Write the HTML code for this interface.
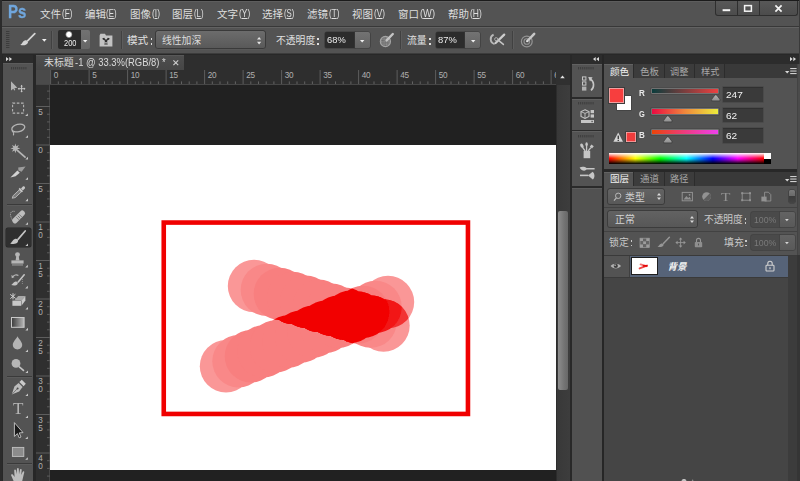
<!DOCTYPE html>
<html><head><meta charset="utf-8"><title>Photoshop</title>
<style>
html,body{margin:0;padding:0;}
body{width:800px;height:481px;overflow:hidden;background:#282828;position:relative;font-family:"Liberation Sans",sans-serif;}
#root{position:absolute;left:0;top:0;width:800px;height:481px;overflow:hidden;background:#282828;}
#root div,#root svg,#root span{position:absolute;display:block;}
#root span{white-space:nowrap;line-height:1;}
#root svg text{font-family:"Liberation Sans","Noto Sans CJK SC",sans-serif;}
</style></head><body><div id="root">
<div style="left:0px;top:0px;width:800px;height:27px;background:#535353;"></div>
<div style="left:0px;top:0px;width:800px;height:1px;background:#1b1b1b;"></div>
<div style="left:0px;top:1px;width:800px;height:1px;background:#5d5d5d;"></div>
<div style="left:0px;top:26px;width:800px;height:1px;background:#383838;"></div>
<div style="left:0px;top:27px;width:800px;height:26.6px;background:#535353;"></div>
<div style="left:0px;top:27px;width:800px;height:1px;background:#626262;"></div>
<div style="left:0px;top:53.4px;width:800px;height:1.1px;background:#3c3c3c;"></div>
<div style="left:0px;top:54.5px;width:800px;height:1.5px;background:#292929;"></div>
<div style="left:0px;top:0px;width:2px;height:481px;background:#2b2b2b;"></div>
<span style="left:8px;top:3.80px;font-size:17.6px;color:#70a6dc;font-weight:bold;transform:scaleX(0.850);transform-origin:0 0;-webkit-text-stroke:0.3px #70a6dc">Ps</span>
<svg style="left:40.182px;top:6.34px" width="26" height="16" viewBox="0 -11.66 26 16"><text x="0" y="0" font-size="10.5" fill="#dedede">文件</text></svg>
<span style="left:61.9px;top:8.80px;font-size:10.4px;color:#dedede;transform:scaleX(0.776);transform-origin:0 0;">(<span style="position:static;display:inline;text-decoration:underline;text-underline-offset:1px">F</span>)</span>
<svg style="left:84.982px;top:6.34px" width="25" height="16" viewBox="0 -11.66 25 16"><text x="0" y="0" font-size="10.5" fill="#dedede">编辑</text></svg>
<span style="left:106.3px;top:8.80px;font-size:10.4px;color:#dedede;transform:scaleX(0.757);transform-origin:0 0;">(<span style="position:static;display:inline;text-decoration:underline;text-underline-offset:1px">E</span>)</span>
<svg style="left:129.982px;top:6.34px" width="25" height="16" viewBox="0 -11.66 25 16"><text x="0" y="0" font-size="10.5" fill="#dedede">图像</text></svg>
<span style="left:151.6px;top:8.80px;font-size:10.4px;color:#dedede;transform:scaleX(0.815);transform-origin:0 0;">(<span style="position:static;display:inline;text-decoration:underline;text-underline-offset:1px">I</span>)</span>
<svg style="left:172.482px;top:6.34px" width="25" height="16" viewBox="0 -11.66 25 16"><text x="0" y="0" font-size="10.5" fill="#dedede">图层</text></svg>
<span style="left:194px;top:8.80px;font-size:10.4px;color:#dedede;transform:scaleX(0.755);transform-origin:0 0;">(<span style="position:static;display:inline;text-decoration:underline;text-underline-offset:1px">L</span>)</span>
<svg style="left:216.982px;top:6.34px" width="25" height="16" viewBox="0 -11.66 25 16"><text x="0" y="0" font-size="10.5" fill="#dedede">文字</text></svg>
<span style="left:238.6px;top:8.80px;font-size:10.4px;color:#dedede;transform:scaleX(0.808);transform-origin:0 0;">(<span style="position:static;display:inline;text-decoration:underline;text-underline-offset:1px">Y</span>)</span>
<svg style="left:262.482px;top:6.34px" width="26" height="16" viewBox="0 -11.66 26 16"><text x="0" y="0" font-size="10.5" fill="#dedede">选择</text></svg>
<span style="left:284.2px;top:8.80px;font-size:10.4px;color:#dedede;transform:scaleX(0.750);transform-origin:0 0;">(<span style="position:static;display:inline;text-decoration:underline;text-underline-offset:1px">S</span>)</span>
<svg style="left:307.482px;top:6.34px" width="26" height="16" viewBox="0 -11.66 26 16"><text x="0" y="0" font-size="10.5" fill="#dedede">滤镜</text></svg>
<span style="left:329.2px;top:8.80px;font-size:10.4px;color:#dedede;transform:scaleX(0.783);transform-origin:0 0;">(<span style="position:static;display:inline;text-decoration:underline;text-underline-offset:1px">T</span>)</span>
<svg style="left:352.482px;top:6.34px" width="26" height="16" viewBox="0 -11.66 26 16"><text x="0" y="0" font-size="10.5" fill="#dedede">视图</text></svg>
<span style="left:374.2px;top:8.80px;font-size:10.4px;color:#dedede;transform:scaleX(0.793);transform-origin:0 0;">(<span style="position:static;display:inline;text-decoration:underline;text-underline-offset:1px">V</span>)</span>
<svg style="left:397.982px;top:6.34px" width="26" height="16" viewBox="0 -11.66 26 16"><text x="0" y="0" font-size="10.5" fill="#dedede">窗口</text></svg>
<span style="left:419.8px;top:8.80px;font-size:10.4px;color:#dedede;transform:scaleX(0.896);transform-origin:0 0;">(<span style="position:static;display:inline;text-decoration:underline;text-underline-offset:1px">W</span>)</span>
<svg style="left:447.982px;top:6.34px" width="26" height="16" viewBox="0 -11.66 26 16"><text x="0" y="0" font-size="10.5" fill="#dedede">帮助</text></svg>
<span style="left:469.8px;top:8.80px;font-size:10.4px;color:#dedede;transform:scaleX(0.817);transform-origin:0 0;">(<span style="position:static;display:inline;text-decoration:underline;text-underline-offset:1px">H</span>)</span>
<div style="left:714.5px;top:1px;width:83px;height:14.5px;background:#4d4d4d;border:1px solid #2e2e2e;border-top:none;border-radius:0 0 3px 3px;box-sizing:border-box;background:linear-gradient(#585858,#4c4c4c)"></div>
<div style="left:737px;top:1px;width:1px;height:14px;background:#2e2e2e;"></div>
<div style="left:759px;top:1px;width:1px;height:14px;background:#2e2e2e;"></div>
<svg style="left:714px;top:1px;" width="84" height="15" viewBox="0 0 84 15"><rect x="8.6" y="8.2" width="7.6" height="2" fill="#f4f4f4"/><rect x="30.6" y="4.6" width="6.8" height="5.6" fill="none" stroke="#f4f4f4" stroke-width="1.5"/><path d="M61.4 4.4L67.6 10.6M67.6 4.4L61.4 10.6" stroke="#f4f4f4" stroke-width="1.7"/></svg>
<svg style="left:6.2px;top:31.4px;" width="4" height="18" viewBox="0 0 4 18"><rect x="0" y="0.0" width="3.4" height="1" fill="#3c3c3c"/><rect x="0" y="2.0" width="3.4" height="1" fill="#3c3c3c"/><rect x="0" y="4.0" width="3.4" height="1" fill="#3c3c3c"/><rect x="0" y="6.0" width="3.4" height="1" fill="#3c3c3c"/><rect x="0" y="8.0" width="3.4" height="1" fill="#3c3c3c"/><rect x="0" y="10.0" width="3.4" height="1" fill="#3c3c3c"/><rect x="0" y="12.0" width="3.4" height="1" fill="#3c3c3c"/><rect x="0" y="14.0" width="3.4" height="1" fill="#3c3c3c"/><rect x="0" y="16.0" width="3.4" height="1" fill="#3c3c3c"/></svg>
<svg style="left:18px;top:31px;" width="20" height="18" viewBox="0 0 20 18"><path d="M16.8 2.6L9.8 9.6" stroke="#d4d4d4" stroke-width="1.8" stroke-linecap="round"/><path d="M2.2 13.8C4.2 13.4 4.2 10 7.2 9.2C9.2 8.8 10.6 10.4 9.8 12C8.4 14.6 4.8 14.8 2.2 13.8Z" fill="#d4d4d4"/></svg>
<svg style="left:42.2px;top:39px;" width="5.6" height="3.8" viewBox="0 0 5.6 3.8"><path d="M0 0L4.6 0L2.3 2.8Z" fill="#f0f0f0"/></svg>
<div style="left:51.4px;top:31px;width:1px;height:18px;background:#414141;"></div>
<div style="left:52.4px;top:31px;width:1px;height:18px;background:#5c5c5c;"></div>
<div style="left:57.8px;top:30.4px;width:23.4px;height:18.8px;background:#2b2b2b;border-radius:2px 0 0 2px"></div>
<div style="left:81.2px;top:30.4px;width:8.4px;height:18.8px;background:linear-gradient(#727272,#666);border-radius:0 2px 2px 0"></div>
<svg style="left:64px;top:30.4px;" width="10" height="9" viewBox="0 0 10 9"><defs><radialGradient id="bd"><stop offset="0.55" stop-color="#fff"/><stop offset="1" stop-color="#fff" stop-opacity="0"/></radialGradient></defs><circle cx="4.9" cy="4.5" r="3.8" fill="url(#bd)"/></svg>
<span style="left:64.2px;top:39.45px;font-size:8.8px;color:#f0f0f0;transform:scaleX(0.845);transform-origin:0 0;">200</span>
<svg style="left:83.2px;top:39.6px;" width="5.4" height="3.6" viewBox="0 0 5.4 3.6"><path d="M0 0L4.4 0L2.2 2.6Z" fill="#f0f0f0"/></svg>
<svg style="left:99px;top:32.6px;" width="15" height="15" viewBox="0 0 15 15"><path d="M0.6 2.4L0.6 13.4L13.4 13.4L13.4 2.4L7 2.4L6 0.8L1.4 0.8Z" fill="#c2c2c2"/><path d="M3.4 5.2L5.2 4.8L6.4 6.6L7.6 6.6L8.8 4.8L10.6 5.2L10.2 6.6L8.2 7.6L8.2 10.2L8.8 11.6L5.2 11.6L5.8 10.2L5.8 7.6L3.8 6.6Z" fill="#2e2e2e"/><rect x="6.3" y="9" width="1.4" height="1.6" fill="#c2c2c2"/></svg>
<div style="left:120.6px;top:31px;width:1px;height:18px;background:#414141;"></div>
<div style="left:121.6px;top:31px;width:1px;height:18px;background:#5c5c5c;"></div>
<svg style="left:127.282px;top:32.44px" width="27" height="16" viewBox="0 -11.66 27 16"><text x="0" y="0" font-size="10.6" fill="#e0e0e0">模式</text></svg>
<div style="left:150.6px;top:38.4px;width:1.5px;height:1.6px;background:#e0e0e0;"></div>
<div style="left:150.6px;top:43.4px;width:1.5px;height:1.6px;background:#e0e0e0;"></div>
<div style="left:156.4px;top:31.4px;width:108.6px;height:17px;background:linear-gradient(#6c6c6c,#595959);border-radius:2.5px;box-shadow:0 0 0 1px #3a3a3a, 0 1.6px 0 0 #5e5e5e"></div>
<svg style="left:162.29399999999998px;top:32.58px" width="43" height="16" viewBox="0 -11.22 43 16"><text x="0" y="0" font-size="9.8" fill="#dcdcdc">线性加深</text></svg>
<svg style="left:257.4px;top:37.4px;" width="5" height="8" viewBox="0 0 5 8"><path d="M0 2.6L2.1 0L4.2 2.6ZM0 4.8L4.2 4.8L2.1 7.4Z" fill="#e4e4e4"/></svg>
<svg style="left:276.094px;top:32.88px" width="43" height="16" viewBox="0 -11.22 43 16"><text x="0" y="0" font-size="9.8" fill="#e0e0e0">不透明度</text></svg>
<div style="left:317.2px;top:38.4px;width:1.5px;height:1.6px;background:#e0e0e0;"></div>
<div style="left:317.2px;top:43.4px;width:1.5px;height:1.6px;background:#e0e0e0;"></div>
<div style="left:325.2px;top:32px;width:29.4px;height:16.2px;background:#2c2c2c;border-radius:2px 0 0 2px;box-shadow:0 0 0 0.6px #3a3a3a"></div>
<div style="left:354.59999999999997px;top:32px;width:15px;height:16.2px;background:linear-gradient(#737373,#636363);border-radius:0 2px 2px 0;box-shadow:0 0 0 0.6px #3a3a3a"></div>
<span style="left:327.3px;top:35.30px;font-size:9.8px;color:#ececec;transform:scaleX(0.953);transform-origin:0 0;">68%</span>
<svg style="left:360.0px;top:39.6px;" width="5.4" height="3.6" viewBox="0 0 5.4 3.6"><path d="M0 0L4.4 0L2.2 2.6Z" fill="#f0f0f0"/></svg>
<svg style="left:378px;top:32px;" width="18" height="18" viewBox="0 0 18 18"><defs><pattern id="ck" width="2.4" height="2.4" patternUnits="userSpaceOnUse" patternTransform="rotate(45)"><rect width="2.4" height="2.4" fill="#6c6c6c"/><rect width="1.2" height="1.2" fill="#8e8e8e"/><rect x="1.2" y="1.2" width="1.2" height="1.2" fill="#8e8e8e"/></pattern></defs><circle cx="7.4" cy="9.5" r="5.1" fill="url(#ck)" stroke="#a4a4a4" stroke-width="1.1"/><path d="M8.6 8.4L14.8 2" stroke="#c4c4c4" stroke-width="2.4" stroke-linecap="round"/></svg>
<div style="left:400.4px;top:31px;width:1px;height:18px;background:#414141;"></div>
<div style="left:401.4px;top:31px;width:1px;height:18px;background:#5c5c5c;"></div>
<svg style="left:407.494px;top:32.88px" width="24" height="16" viewBox="0 -11.22 24 16"><text x="0" y="0" font-size="9.8" fill="#e0e0e0">流量</text></svg>
<div style="left:429.2px;top:38.4px;width:1.5px;height:1.6px;background:#e0e0e0;"></div>
<div style="left:429.2px;top:43.4px;width:1.5px;height:1.6px;background:#e0e0e0;"></div>
<div style="left:436px;top:32px;width:29.4px;height:16.2px;background:#2c2c2c;border-radius:2px 0 0 2px;box-shadow:0 0 0 0.6px #3a3a3a"></div>
<div style="left:465.4px;top:32px;width:15px;height:16.2px;background:linear-gradient(#737373,#636363);border-radius:0 2px 2px 0;box-shadow:0 0 0 0.6px #3a3a3a"></div>
<span style="left:438.2px;top:35.30px;font-size:9.8px;color:#ececec;transform:scaleX(0.958);transform-origin:0 0;">87%</span>
<svg style="left:470.8px;top:39.6px;" width="5.4" height="3.6" viewBox="0 0 5.4 3.6"><path d="M0 0L4.4 0L2.2 2.6Z" fill="#f0f0f0"/></svg>
<svg style="left:489px;top:32px;" width="18" height="16" viewBox="0 0 18 16"><path d="M4.6 2.6C0.6 4.4 0.6 10.6 5.6 12" fill="none" stroke="#b8b8b8" stroke-width="1.9"/><path d="M6.6 11L15.2 2.6" stroke="#cccccc" stroke-width="2.3" stroke-linecap="round"/><path d="M9.8 8.6L14.4 12.4" stroke="#c4c4c4" stroke-width="1.5" stroke-linecap="round"/><circle cx="7.2" cy="7.2" r="1.6" fill="none" stroke="#b0b0b0" stroke-width="0.9"/></svg>
<div style="left:512px;top:31px;width:1px;height:18px;background:#414141;"></div>
<div style="left:513px;top:31px;width:1px;height:18px;background:#5c5c5c;"></div>
<svg style="left:519px;top:32px;" width="18" height="18" viewBox="0 0 18 18"><circle cx="7.8" cy="9.5" r="5.4" fill="none" stroke="#949494" stroke-width="1.2"/><circle cx="7.8" cy="9.5" r="2.8" fill="none" stroke="#949494" stroke-width="1.1"/><path d="M8.4 9L15.2 1.8" stroke="#c6c6c6" stroke-width="2.5" stroke-linecap="round"/><circle cx="8.2" cy="9.2" r="0.9" fill="#e4e4e4"/></svg>
<div style="left:2.8px;top:54.6px;width:30.6px;height:8.8px;background:#2c2c2c;"></div>
<div style="left:2.8px;top:63.4px;width:30.6px;height:417.6px;background:#535353;"></div>
<div style="left:2.8px;top:63.4px;width:30.6px;height:1px;background:#5c5c5c;"></div>
<div style="left:33.4px;top:54.6px;width:2.6px;height:426.4px;background:#272727;"></div>
<svg style="left:6.2px;top:57.1px;" width="8" height="5" viewBox="0 0 8 5"><path d="M0 0L2.7 2.1L0 4.2ZM3.3 0L6 2.1L3.3 4.2Z" fill="#dcdcdc"/></svg>
<svg style="left:10.5px;top:67px;" width="17" height="3" viewBox="0 0 17 3"><rect x="0.00" y="0" width="1.1" height="2.4" fill="#3e3e3e"/><rect x="2.05" y="0" width="1.1" height="2.4" fill="#3e3e3e"/><rect x="4.10" y="0" width="1.1" height="2.4" fill="#3e3e3e"/><rect x="6.15" y="0" width="1.1" height="2.4" fill="#3e3e3e"/><rect x="8.20" y="0" width="1.1" height="2.4" fill="#3e3e3e"/><rect x="10.25" y="0" width="1.1" height="2.4" fill="#3e3e3e"/><rect x="12.30" y="0" width="1.1" height="2.4" fill="#3e3e3e"/><rect x="14.35" y="0" width="1.1" height="2.4" fill="#3e3e3e"/></svg>
<div style="left:6px;top:228px;width:25px;height:19px;background:#2f2f2f;border-radius:2px;box-shadow:0 0 0 0.5px #262626"></div>
<div style="left:6.5px;top:203.5px;width:25px;height:1px;background:#3a3a3a;"></div>
<div style="left:6.5px;top:204.5px;width:25px;height:1px;background:#5b5b5b;"></div>
<div style="left:6.5px;top:375.5px;width:25px;height:1px;background:#3a3a3a;"></div>
<div style="left:6.5px;top:376.5px;width:25px;height:1px;background:#5b5b5b;"></div>
<div style="left:6.5px;top:462.5px;width:25px;height:1px;background:#3a3a3a;"></div>
<div style="left:6.5px;top:463.5px;width:25px;height:1px;background:#5b5b5b;"></div>
<svg style="left:0;top:0" width="36" height="481" viewBox="0 0 36 481"><path d="M11 81.3L11 90.6L13.3 88.7L14.2 90.6L15.3 90.1L14.4 88.2L17.3 87.7Z" fill="#b4b4b4"/><path d="M21.6 85.4L21.6 92M18.3 88.7L24.9 88.7" stroke="#c6c6c6" stroke-width="1" fill="none"/><path d="M20.4 86.4L21.6 84.8L22.8 86.4ZM20.4 91L21.6 92.6L22.8 91ZM19.3 87.5L17.7 88.7L19.3 89.9ZM23.9 87.5L25.5 88.7L23.9 89.9Z" fill="#c6c6c6"/><rect x="12.6" y="103.1" width="11" height="10" fill="none" stroke="#b6b6b6" stroke-width="1.05" stroke-dasharray="2.6 1.6"/><path d="M27.8 113.4L27.8 116.0L25.2 116.0Z" fill="#c8c8c8"/><ellipse cx="18.3" cy="128" rx="6.6" ry="3.7" transform="rotate(-14 18.3 128)" fill="none" stroke="#b6b6b6" stroke-width="1.3"/><path d="M12.4 130.2C11.6 132.2 14.2 132.6 14.2 131.4M13.2 132.2C14 133.4 13.8 134.6 13.2 135.4" fill="none" stroke="#b6b6b6" stroke-width="1.1"/><path d="M28.0 135.2L28.0 137.79999999999998L25.4 137.79999999999998Z" fill="#c8c8c8"/><path d="M20.30 148.40 L17.43 149.24 L18.86 151.86 L16.24 150.43 L15.40 153.30 L14.56 150.43 L11.94 151.86 L13.37 149.24 L10.50 148.40 L13.37 147.56 L11.94 144.94 L14.56 146.37 L15.40 143.50 L16.24 146.37 L18.86 144.94 L17.43 147.56Z" fill="#b6b6b6"/><path d="M17.6 150.6L25.6 157.6" stroke="#b6b6b6" stroke-width="1.7"/><path d="M28.0 156.8L28.0 159.4L25.4 159.4Z" fill="#c8c8c8"/><path d="M10.4 177.4L17.4 170.6L19.8 172.8L15.6 176.2Z" fill="#d2d2d2"/><path d="M18.2 167.6L25.6 166.4L21.6 171.8L18.4 170.4Z" fill="#9c9c9c"/><path d="M28.0 177.2L28.0 179.79999999999998L25.4 179.79999999999998Z" fill="#c8c8c8"/><path d="M12.2 198.2L13.2 195.6L19.4 189.8L21.4 191.8L15.2 197.6Z" fill="#7c7c7c" stroke="#b6b6b6" stroke-width="1"/><path d="M18.6 189L21.8 192.4L23 191.2L19.8 187.8Z" fill="#c6c6c6"/><path d="M21 188.6L22.8 186.6C24 185.6 25.8 187.2 24.8 188.6L22.8 190.4Z" fill="#c6c6c6"/><path d="M28.0 198.6L28.0 201.2L25.4 201.2Z" fill="#c8c8c8"/><rect x="10.8" y="214.2" width="15.6" height="5.4" rx="2.4" transform="rotate(-45 18.6 216.9)" fill="#bdbdbd"/><path d="M16.4 217.2L19 219.8M17.8 215.8L20.4 218.4M19.2 214.4L21.8 217" stroke="#6a6a6a" stroke-width="0.8"/><path d="M14.6 211.4C11.4 210.6 10 213 10.6 215.4C11 217.4 11.6 219 12.8 220.4" fill="none" stroke="#b0b0b0" stroke-width="0.9" stroke-dasharray="1 0.8"/><path d="M28.0 222.2L28.0 224.79999999999998L25.4 224.79999999999998Z" fill="#c8c8c8"/><path d="M25.2 231L18 239.4" stroke="#c4c4c4" stroke-width="1.7" stroke-linecap="round"/><path d="M10.2 243.4C12.2 242.8 12.2 239.6 15.4 238.8C17.6 238.6 18.8 240.4 17.8 242C16.4 244.2 12.8 244.4 10.2 243.4Z" fill="#c4c4c4"/><path d="M28.0 243.4L28.0 246.0L25.4 246.0Z" fill="#c8c8c8"/><circle cx="17.5" cy="254.6" r="2.4" fill="#b6b6b6"/><path d="M16.3 256L18.7 256L19.4 260.4L15.6 260.4Z" fill="#b6b6b6"/><rect x="11.4" y="260.4" width="12.2" height="3.2" fill="#b6b6b6"/><rect x="12" y="264.4" width="11" height="1.1" fill="#9a9a9a"/><path d="M27.8 264.8L27.8 267.40000000000003L25.2 267.40000000000003Z" fill="#c8c8c8"/><path d="M24.2 274.8L18.2 282" stroke="#c4c4c4" stroke-width="1.6" stroke-linecap="round"/><path d="M11.2 285C12.8 284.6 13 282.2 15.6 281.6C17.2 281.4 18.4 282.8 17.6 284C16.4 285.8 13.4 285.8 11.2 285Z" fill="#c4c4c4"/><path d="M12.4 277.2C13.6 274.8 16.6 274.4 18.4 275.4" fill="none" stroke="#b6b6b6" stroke-width="1.1"/><path d="M11.4 275L11.8 278.2L14.6 277Z" fill="#b6b6b6"/><path d="M22.4 279L22.4 285" stroke="#9a9a9a" stroke-width="0.8" stroke-dasharray="1 1"/><path d="M27.8 285.8L27.8 288.40000000000003L25.2 288.40000000000003Z" fill="#c8c8c8"/><path d="M14.4 300.2L18.2 296L25.4 296L21.6 300.2Z" fill="#a8a8a8"/><path d="M21.6 300.2L25.4 296L25.4 300.6L21.6 305.4Z" fill="#cacaca"/><rect x="12.4" y="300.6" width="8.8" height="5.2" fill="#c8c8c8"/><path d="M10.2 294.4L15.6 298.4M10.4 298.6L15.4 294.2M13 293.2L13 299.4" stroke="#cecece" stroke-width="1"/><path d="M28.0 307L28.0 309.6L25.4 309.6Z" fill="#c8c8c8"/><defs><linearGradient id="gt" x1="0" x2="1"><stop offset="0" stop-color="#3a3a3a"/><stop offset="1" stop-color="#b8b8b8"/></linearGradient></defs><rect x="11.5" y="317.5" width="12.6" height="9.8" fill="url(#gt)" stroke="#c8c8c8" stroke-width="1"/><path d="M28.0 327.8L28.0 330.40000000000003L25.4 330.40000000000003Z" fill="#c8c8c8"/><path d="M17.5 336.2C19 339.4 22.2 341.8 22.2 344.8C22.2 347.6 20 349.4 17.5 349.4C15 349.4 12.8 347.6 12.8 344.8C12.8 341.8 16 339.4 17.5 336.2Z" fill="#b4b4b4"/><path d="M28.0 349.4L28.0 352.0L25.4 352.0Z" fill="#c8c8c8"/><circle cx="16" cy="363.4" r="4.4" fill="#b6b6b6"/><path d="M19 366.6L24 370.8" stroke="#c4c4c4" stroke-width="1.6"/><path d="M28.0 370.4L28.0 373.0L25.4 373.0Z" fill="#c8c8c8"/><path d="M11.8 394.4L14.4 386.4L18.6 383L22.6 387L19.2 391.4Z" fill="#bcbcbc"/><path d="M19.4 382L21.8 379.8L25.8 383.8L23.6 386.2Z" fill="#cacaca"/><circle cx="17.6" cy="388.4" r="1" fill="#4a4a4a"/><path d="M12.2 394L17 389" stroke="#5a5a5a" stroke-width="0.7"/><path d="M28.0 393.4L28.0 396.0L25.4 396.0Z" fill="#c8c8c8"/><path d="M28.0 415.4L28.0 418.0L25.4 418.0Z" fill="#c8c8c8"/><path d="M14.4 422.6L14.4 436.4L17.4 433.6L19.2 437.8L21 437L19.2 432.9L23 432.6Z" fill="#1a1a1a" stroke="#c8c8c8" stroke-width="0.9"/><path d="M27.8 436.4L27.8 439.0L25.2 439.0Z" fill="#c8c8c8"/><rect x="12.4" y="447.4" width="11.4" height="9" fill="#8c8c8c" stroke="#c2c2c2" stroke-width="0.9"/><path d="M27.8 457.2L27.8 459.8L25.2 459.8Z" fill="#c8c8c8"/><path d="M13.6 481L11.2 475.6C10.8 474.4 12.2 473.8 13 474.8L14.6 477L14.2 470.4C14.2 469.2 15.8 469.2 16 470.4L16.6 474.2L17 468.8C17.1 467.6 18.7 467.6 18.8 468.8L19 474.2L20 469.6C20.2 468.4 21.8 468.8 21.7 470L21.2 475L22.6 472C23.2 470.8 24.6 471.4 24.2 472.6L22.2 481Z" fill="#bebebe"/></svg>
<span style="left:12.8px;top:401.25px;font-size:16.5px;color:#b4b4b4;font-family:'Liberation Serif',serif;transform:scaleX(1.032);transform-origin:0 0;">T</span>
<div style="left:36px;top:55.3px;width:534px;height:14.7px;background:#2e2e2e;"></div>
<div style="left:36px;top:55.3px;width:147.6px;height:14.7px;background:linear-gradient(#4e4e4e,#464646);"></div>
<div style="left:36px;top:55.3px;width:147.6px;height:1px;background:#585858;"></div>
<svg style="left:43.888000000000005px;top:55.16px" width="34" height="16" viewBox="0 -11.44 34 16"><text x="0" y="0" font-size="9.9" fill="#dadada">未标题</text></svg>
<span style="left:75.2px;top:57.46px;font-size:10.8px;color:#dadada;transform:scaleX(0.873);transform-origin:0 0;">-1 @ 33.3%(RGB/8) *</span>
<svg style="left:171.6px;top:59.4px;" width="8" height="8" viewBox="0 0 8 8"><path d="M1.4 1.4L6.2 6.2M6.2 1.4L1.4 6.2" stroke="#cccccc" stroke-width="1.15" fill="none"/></svg>
<div style="left:36px;top:70px;width:14px;height:14px;background:#4a4a4a;"></div>
<div style="left:50px;top:70px;width:506px;height:14px;background:#2e2e2e;"></div>
<div style="left:36px;top:84px;width:520px;height:1px;background:#464646;"></div>
<div style="left:36px;top:85px;width:14px;height:396px;background:#2f2f2f;"></div>
<div style="left:50px;top:85px;width:506px;height:396px;background:#212121;"></div>
<div style="left:49px;top:85px;width:1px;height:396px;background:#464646;"></div>
<div style="left:49.8px;top:144.7px;width:506.4px;height:325.5px;background:#ffffff;"></div>
<svg style="left:50px;top:70px;" width="506" height="14" viewBox="0 0 506 14"><rect x="0.10" y="0" width="1" height="14" fill="#5e5e5e"/><rect x="7.80" y="11.4" width="1" height="2.6" fill="#626262"/><rect x="15.50" y="11.4" width="1" height="2.6" fill="#626262"/><rect x="23.20" y="11.4" width="1" height="2.6" fill="#626262"/><rect x="30.90" y="11.4" width="1" height="2.6" fill="#626262"/><rect x="38.60" y="0" width="1" height="14" fill="#5e5e5e"/><rect x="46.30" y="11.4" width="1" height="2.6" fill="#626262"/><rect x="54.00" y="11.4" width="1" height="2.6" fill="#626262"/><rect x="61.70" y="11.4" width="1" height="2.6" fill="#626262"/><rect x="69.40" y="11.4" width="1" height="2.6" fill="#626262"/><rect x="77.10" y="0" width="1" height="14" fill="#5e5e5e"/><rect x="84.80" y="11.4" width="1" height="2.6" fill="#626262"/><rect x="92.50" y="11.4" width="1" height="2.6" fill="#626262"/><rect x="100.20" y="11.4" width="1" height="2.6" fill="#626262"/><rect x="107.90" y="11.4" width="1" height="2.6" fill="#626262"/><rect x="115.60" y="0" width="1" height="14" fill="#5e5e5e"/><rect x="123.30" y="11.4" width="1" height="2.6" fill="#626262"/><rect x="131.00" y="11.4" width="1" height="2.6" fill="#626262"/><rect x="138.70" y="11.4" width="1" height="2.6" fill="#626262"/><rect x="146.40" y="11.4" width="1" height="2.6" fill="#626262"/><rect x="154.10" y="0" width="1" height="14" fill="#5e5e5e"/><rect x="161.80" y="11.4" width="1" height="2.6" fill="#626262"/><rect x="169.50" y="11.4" width="1" height="2.6" fill="#626262"/><rect x="177.20" y="11.4" width="1" height="2.6" fill="#626262"/><rect x="184.90" y="11.4" width="1" height="2.6" fill="#626262"/><rect x="192.60" y="0" width="1" height="14" fill="#5e5e5e"/><rect x="200.30" y="11.4" width="1" height="2.6" fill="#626262"/><rect x="208.00" y="11.4" width="1" height="2.6" fill="#626262"/><rect x="215.70" y="11.4" width="1" height="2.6" fill="#626262"/><rect x="223.40" y="11.4" width="1" height="2.6" fill="#626262"/><rect x="231.10" y="0" width="1" height="14" fill="#5e5e5e"/><rect x="238.80" y="11.4" width="1" height="2.6" fill="#626262"/><rect x="246.50" y="11.4" width="1" height="2.6" fill="#626262"/><rect x="254.20" y="11.4" width="1" height="2.6" fill="#626262"/><rect x="261.90" y="11.4" width="1" height="2.6" fill="#626262"/><rect x="269.60" y="0" width="1" height="14" fill="#5e5e5e"/><rect x="277.30" y="11.4" width="1" height="2.6" fill="#626262"/><rect x="285.00" y="11.4" width="1" height="2.6" fill="#626262"/><rect x="292.70" y="11.4" width="1" height="2.6" fill="#626262"/><rect x="300.40" y="11.4" width="1" height="2.6" fill="#626262"/><rect x="308.10" y="0" width="1" height="14" fill="#5e5e5e"/><rect x="315.80" y="11.4" width="1" height="2.6" fill="#626262"/><rect x="323.50" y="11.4" width="1" height="2.6" fill="#626262"/><rect x="331.20" y="11.4" width="1" height="2.6" fill="#626262"/><rect x="338.90" y="11.4" width="1" height="2.6" fill="#626262"/><rect x="346.60" y="0" width="1" height="14" fill="#5e5e5e"/><rect x="354.30" y="11.4" width="1" height="2.6" fill="#626262"/><rect x="362.00" y="11.4" width="1" height="2.6" fill="#626262"/><rect x="369.70" y="11.4" width="1" height="2.6" fill="#626262"/><rect x="377.40" y="11.4" width="1" height="2.6" fill="#626262"/><rect x="385.10" y="0" width="1" height="14" fill="#5e5e5e"/><rect x="392.80" y="11.4" width="1" height="2.6" fill="#626262"/><rect x="400.50" y="11.4" width="1" height="2.6" fill="#626262"/><rect x="408.20" y="11.4" width="1" height="2.6" fill="#626262"/><rect x="415.90" y="11.4" width="1" height="2.6" fill="#626262"/><rect x="423.60" y="0" width="1" height="14" fill="#5e5e5e"/><rect x="431.30" y="11.4" width="1" height="2.6" fill="#626262"/><rect x="439.00" y="11.4" width="1" height="2.6" fill="#626262"/><rect x="446.70" y="11.4" width="1" height="2.6" fill="#626262"/><rect x="454.40" y="11.4" width="1" height="2.6" fill="#626262"/><rect x="462.10" y="0" width="1" height="14" fill="#5e5e5e"/><rect x="469.80" y="11.4" width="1" height="2.6" fill="#626262"/><rect x="477.50" y="11.4" width="1" height="2.6" fill="#626262"/><rect x="485.20" y="11.4" width="1" height="2.6" fill="#626262"/><rect x="492.90" y="11.4" width="1" height="2.6" fill="#626262"/><rect x="500.60" y="0" width="1" height="14" fill="#5e5e5e"/></svg>
<span style="left:53.8px;top:72.16px;font-size:8.2px;color:#b0b0b0;transform:scaleX(1.000);transform-origin:0 0;letter-spacing:-0.3px">0</span>
<span style="left:92.3px;top:72.16px;font-size:8.2px;color:#b0b0b0;transform:scaleX(1.000);transform-origin:0 0;letter-spacing:-0.3px">5</span>
<span style="left:130.8px;top:72.16px;font-size:8.2px;color:#b0b0b0;transform:scaleX(1.000);transform-origin:0 0;letter-spacing:-0.3px">10</span>
<span style="left:169.3px;top:72.16px;font-size:8.2px;color:#b0b0b0;transform:scaleX(1.000);transform-origin:0 0;letter-spacing:-0.3px">15</span>
<span style="left:207.8px;top:72.16px;font-size:8.2px;color:#b0b0b0;transform:scaleX(1.000);transform-origin:0 0;letter-spacing:-0.3px">20</span>
<span style="left:246.3px;top:72.16px;font-size:8.2px;color:#b0b0b0;transform:scaleX(1.000);transform-origin:0 0;letter-spacing:-0.3px">25</span>
<span style="left:284.8px;top:72.16px;font-size:8.2px;color:#b0b0b0;transform:scaleX(1.000);transform-origin:0 0;letter-spacing:-0.3px">30</span>
<span style="left:323.3px;top:72.16px;font-size:8.2px;color:#b0b0b0;transform:scaleX(1.000);transform-origin:0 0;letter-spacing:-0.3px">35</span>
<span style="left:361.8px;top:72.16px;font-size:8.2px;color:#b0b0b0;transform:scaleX(1.000);transform-origin:0 0;letter-spacing:-0.3px">40</span>
<span style="left:400.3px;top:72.16px;font-size:8.2px;color:#b0b0b0;transform:scaleX(1.000);transform-origin:0 0;letter-spacing:-0.3px">45</span>
<span style="left:438.8px;top:72.16px;font-size:8.2px;color:#b0b0b0;transform:scaleX(1.000);transform-origin:0 0;letter-spacing:-0.3px">50</span>
<span style="left:477.3px;top:72.16px;font-size:8.2px;color:#b0b0b0;transform:scaleX(1.000);transform-origin:0 0;letter-spacing:-0.3px">55</span>
<span style="left:515.8px;top:72.16px;font-size:8.2px;color:#b0b0b0;transform:scaleX(1.000);transform-origin:0 0;letter-spacing:-0.3px">60</span>
<span style="left:554.3px;top:72.16px;font-size:8.2px;color:#b0b0b0;transform:scaleX(1.000);transform-origin:0 0;letter-spacing:-0.3px">65</span>
<svg style="left:36px;top:85px;" width="14" height="396" viewBox="0 0 14 396"><rect x="11" y="5.60" width="3" height="1" fill="#5c5c5c"/><rect x="11" y="13.30" width="3" height="1" fill="#5c5c5c"/><rect x="0" y="21.00" width="14" height="1" fill="#5e5e5e"/><rect x="11" y="28.70" width="3" height="1" fill="#5c5c5c"/><rect x="11" y="36.40" width="3" height="1" fill="#5c5c5c"/><rect x="11" y="44.10" width="3" height="1" fill="#5c5c5c"/><rect x="11" y="51.80" width="3" height="1" fill="#5c5c5c"/><rect x="0" y="59.50" width="14" height="1" fill="#5e5e5e"/><rect x="11" y="67.20" width="3" height="1" fill="#5c5c5c"/><rect x="11" y="74.90" width="3" height="1" fill="#5c5c5c"/><rect x="11" y="82.60" width="3" height="1" fill="#5c5c5c"/><rect x="11" y="90.30" width="3" height="1" fill="#5c5c5c"/><rect x="0" y="98.00" width="14" height="1" fill="#5e5e5e"/><rect x="11" y="105.70" width="3" height="1" fill="#5c5c5c"/><rect x="11" y="113.40" width="3" height="1" fill="#5c5c5c"/><rect x="11" y="121.10" width="3" height="1" fill="#5c5c5c"/><rect x="11" y="128.80" width="3" height="1" fill="#5c5c5c"/><rect x="0" y="136.50" width="14" height="1" fill="#5e5e5e"/><rect x="11" y="144.20" width="3" height="1" fill="#5c5c5c"/><rect x="11" y="151.90" width="3" height="1" fill="#5c5c5c"/><rect x="11" y="159.60" width="3" height="1" fill="#5c5c5c"/><rect x="11" y="167.30" width="3" height="1" fill="#5c5c5c"/><rect x="0" y="175.00" width="14" height="1" fill="#5e5e5e"/><rect x="11" y="182.70" width="3" height="1" fill="#5c5c5c"/><rect x="11" y="190.40" width="3" height="1" fill="#5c5c5c"/><rect x="11" y="198.10" width="3" height="1" fill="#5c5c5c"/><rect x="11" y="205.80" width="3" height="1" fill="#5c5c5c"/><rect x="0" y="213.50" width="14" height="1" fill="#5e5e5e"/><rect x="11" y="221.20" width="3" height="1" fill="#5c5c5c"/><rect x="11" y="228.90" width="3" height="1" fill="#5c5c5c"/><rect x="11" y="236.60" width="3" height="1" fill="#5c5c5c"/><rect x="11" y="244.30" width="3" height="1" fill="#5c5c5c"/><rect x="0" y="252.00" width="14" height="1" fill="#5e5e5e"/><rect x="11" y="259.70" width="3" height="1" fill="#5c5c5c"/><rect x="11" y="267.40" width="3" height="1" fill="#5c5c5c"/><rect x="11" y="275.10" width="3" height="1" fill="#5c5c5c"/><rect x="11" y="282.80" width="3" height="1" fill="#5c5c5c"/><rect x="0" y="290.50" width="14" height="1" fill="#5e5e5e"/><rect x="11" y="298.20" width="3" height="1" fill="#5c5c5c"/><rect x="11" y="305.90" width="3" height="1" fill="#5c5c5c"/><rect x="11" y="313.60" width="3" height="1" fill="#5c5c5c"/><rect x="11" y="321.30" width="3" height="1" fill="#5c5c5c"/><rect x="0" y="329.00" width="14" height="1" fill="#5e5e5e"/><rect x="11" y="336.70" width="3" height="1" fill="#5c5c5c"/><rect x="11" y="344.40" width="3" height="1" fill="#5c5c5c"/><rect x="11" y="352.10" width="3" height="1" fill="#5c5c5c"/><rect x="11" y="359.80" width="3" height="1" fill="#5c5c5c"/><rect x="0" y="367.50" width="14" height="1" fill="#5e5e5e"/><rect x="11" y="375.20" width="3" height="1" fill="#5c5c5c"/><rect x="11" y="382.90" width="3" height="1" fill="#5c5c5c"/><rect x="11" y="390.60" width="3" height="1" fill="#5c5c5c"/></svg>
<span style="left:38.2px;top:108.66px;font-size:8.2px;color:#b0b0b0;transform:scaleX(1.000);transform-origin:0 0;">5</span>
<span style="left:38.2px;top:147.16px;font-size:8.2px;color:#b0b0b0;transform:scaleX(1.000);transform-origin:0 0;">0</span>
<span style="left:38.2px;top:185.66px;font-size:8.2px;color:#b0b0b0;transform:scaleX(1.000);transform-origin:0 0;">5</span>
<span style="left:38.2px;top:224.16px;font-size:8.2px;color:#b0b0b0;transform:scaleX(1.000);transform-origin:0 0;">1</span>
<span style="left:38.2px;top:232.36px;font-size:8.2px;color:#b0b0b0;transform:scaleX(1.000);transform-origin:0 0;">0</span>
<span style="left:38.2px;top:262.66px;font-size:8.2px;color:#b0b0b0;transform:scaleX(1.000);transform-origin:0 0;">1</span>
<span style="left:38.2px;top:270.86px;font-size:8.2px;color:#b0b0b0;transform:scaleX(1.000);transform-origin:0 0;">5</span>
<span style="left:38.2px;top:301.16px;font-size:8.2px;color:#b0b0b0;transform:scaleX(1.000);transform-origin:0 0;">2</span>
<span style="left:38.2px;top:309.36px;font-size:8.2px;color:#b0b0b0;transform:scaleX(1.000);transform-origin:0 0;">0</span>
<span style="left:38.2px;top:339.66px;font-size:8.2px;color:#b0b0b0;transform:scaleX(1.000);transform-origin:0 0;">2</span>
<span style="left:38.2px;top:347.86px;font-size:8.2px;color:#b0b0b0;transform:scaleX(1.000);transform-origin:0 0;">5</span>
<span style="left:38.2px;top:378.16px;font-size:8.2px;color:#b0b0b0;transform:scaleX(1.000);transform-origin:0 0;">3</span>
<span style="left:38.2px;top:386.36px;font-size:8.2px;color:#b0b0b0;transform:scaleX(1.000);transform-origin:0 0;">0</span>
<span style="left:38.2px;top:416.66px;font-size:8.2px;color:#b0b0b0;transform:scaleX(1.000);transform-origin:0 0;">3</span>
<span style="left:38.2px;top:424.86px;font-size:8.2px;color:#b0b0b0;transform:scaleX(1.000);transform-origin:0 0;">5</span>
<span style="left:38.2px;top:455.16px;font-size:8.2px;color:#b0b0b0;transform:scaleX(1.000);transform-origin:0 0;">4</span>
<span style="left:38.2px;top:463.36px;font-size:8.2px;color:#b0b0b0;transform:scaleX(1.000);transform-origin:0 0;">0</span>
<svg style="left:0;top:0" width="800" height="481" viewBox="0 0 800 481"><defs>
<clipPath id="c1"><circle cx="254.0" cy="286.0" r="26.2" fill="#000"/><circle cx="266.9" cy="289.9" r="26.2" fill="#000"/><circle cx="279.9" cy="293.9" r="26.2" fill="#000"/><circle cx="292.9" cy="297.9" r="26.2" fill="#000"/><circle cx="305.8" cy="301.8" r="26.2" fill="#000"/><circle cx="318.8" cy="305.8" r="26.2" fill="#000"/><circle cx="331.7" cy="309.7" r="26.2" fill="#000"/><circle cx="344.6" cy="313.6" r="26.2" fill="#000"/><circle cx="357.6" cy="317.6" r="26.2" fill="#000"/><circle cx="370.6" cy="321.6" r="26.2" fill="#000"/><circle cx="383.5" cy="325.5" r="26.2" fill="#000"/></clipPath>
<filter id="soft" x="-5%" y="-5%" width="110%" height="110%"><feGaussianBlur stdDeviation="0.55"/></filter>
</defs>
<rect x="163.75" y="222.55" width="304.2" height="191.4" fill="none" stroke="#f00000" stroke-width="4.6"/>
<g filter="url(#soft)">
<circle cx="254.0" cy="286.0" r="26.2" fill="#fa9797"/><circle cx="383.5" cy="325.5" r="26.2" fill="#fa9797"/><circle cx="266.9" cy="289.9" r="26.2" fill="#f98888"/><circle cx="370.6" cy="321.6" r="26.2" fill="#f98888"/><circle cx="279.9" cy="293.9" r="26.2" fill="#f87f7f"/><circle cx="292.9" cy="297.9" r="26.2" fill="#f87f7f"/><circle cx="305.8" cy="301.8" r="26.2" fill="#f87f7f"/><circle cx="318.8" cy="305.8" r="26.2" fill="#f87f7f"/><circle cx="331.7" cy="309.7" r="26.2" fill="#f87f7f"/><circle cx="344.6" cy="313.6" r="26.2" fill="#f87f7f"/><circle cx="357.6" cy="317.6" r="26.2" fill="#f87f7f"/>
<circle cx="226.0" cy="366.2" r="26.2" fill="#fa9797"/><circle cx="388.0" cy="302.0" r="26.2" fill="#fa9797"/><circle cx="238.5" cy="361.3" r="26.2" fill="#f98888"/><circle cx="375.5" cy="306.9" r="26.2" fill="#f98888"/><circle cx="250.9" cy="356.3" r="26.2" fill="#f87f7f"/><circle cx="263.4" cy="351.4" r="26.2" fill="#f87f7f"/><circle cx="275.8" cy="346.4" r="26.2" fill="#f87f7f"/><circle cx="288.3" cy="341.5" r="26.2" fill="#f87f7f"/><circle cx="300.8" cy="336.6" r="26.2" fill="#f87f7f"/><circle cx="313.2" cy="331.6" r="26.2" fill="#f87f7f"/><circle cx="325.7" cy="326.7" r="26.2" fill="#f87f7f"/><circle cx="338.2" cy="321.8" r="26.2" fill="#f87f7f"/><circle cx="350.6" cy="316.8" r="26.2" fill="#f87f7f"/><circle cx="363.1" cy="311.9" r="26.2" fill="#f87f7f"/>
<g clip-path="url(#c1)"><circle cx="226.0" cy="366.2" r="26.2" fill="#f23030"/><circle cx="388.0" cy="302.0" r="26.2" fill="#f23030"/><circle cx="238.5" cy="361.3" r="26.2" fill="#f21414"/><circle cx="375.5" cy="306.9" r="26.2" fill="#f21414"/><circle cx="250.9" cy="356.3" r="26.2" fill="#f20202"/><circle cx="263.4" cy="351.4" r="26.2" fill="#f20202"/><circle cx="275.8" cy="346.4" r="26.2" fill="#f20202"/><circle cx="288.3" cy="341.5" r="26.2" fill="#f20202"/><circle cx="300.8" cy="336.6" r="26.2" fill="#f20202"/><circle cx="313.2" cy="331.6" r="26.2" fill="#f20202"/><circle cx="325.7" cy="326.7" r="26.2" fill="#f20202"/><circle cx="338.2" cy="321.8" r="26.2" fill="#f20202"/><circle cx="350.6" cy="316.8" r="26.2" fill="#f20202"/><circle cx="363.1" cy="311.9" r="26.2" fill="#f20202"/></g>
</g></svg>
<div style="left:556px;top:70px;width:14px;height:15px;background:#303030;"></div>
<div style="left:556px;top:85px;width:14px;height:396px;background:linear-gradient(90deg,#383838,#3d3d3d);"></div>
<div style="left:556px;top:85px;width:1px;height:396px;background:#2c2c2c;"></div>
<div style="left:557.5px;top:211px;width:10px;height:179px;background:linear-gradient(90deg,#8e8e8e,#747474 60%,#686868);border-radius:2px"></div>
<svg style="left:560px;top:75.2px;" width="6" height="4" viewBox="0 0 6 4"><path d="M0.2 3.2L2.5 0.4L4.8 3.2Z" fill="#e2e2e2"/></svg>
<div style="left:570px;top:55px;width:2px;height:426px;background:#282828;"></div>
<div style="left:571.6px;top:55px;width:30.8px;height:8.6px;background:#2c2c2c;"></div>
<div style="left:603.8px;top:55px;width:196.2px;height:8.6px;background:#2c2c2c;"></div>
<div style="left:602.4px;top:55px;width:1.4px;height:426px;background:#262626;"></div>
<svg style="left:592.8px;top:57.3px;" width="8" height="5" viewBox="0 0 8 5"><path d="M2.7 0L0 2.1L2.7 4.2ZM6 0L3.3 2.1L6 4.2Z" fill="#dcdcdc"/></svg>
<svg style="left:790.2px;top:57.1px;" width="8" height="5" viewBox="0 0 8 5"><path d="M0 0L2.7 2.1L0 4.2ZM3.3 0L6 2.1L3.3 4.2Z" fill="#dcdcdc"/></svg>
<div style="left:571.6px;top:63.6px;width:30.8px;height:417.4px;background:#2a2a2a;"></div>
<div style="left:571.6px;top:63.6px;width:30.8px;height:33.4px;background:#535353;"></div>
<div style="left:571.6px;top:63.6px;width:30.8px;height:1px;background:#616161;"></div>
<svg style="left:578.4px;top:67.0px;" width="17" height="3" viewBox="0 0 17 3"><rect x="0.00" y="0" width="1.1" height="2.4" fill="#3e3e3e"/><rect x="2.08" y="0" width="1.1" height="2.4" fill="#3e3e3e"/><rect x="4.16" y="0" width="1.1" height="2.4" fill="#3e3e3e"/><rect x="6.24" y="0" width="1.1" height="2.4" fill="#3e3e3e"/><rect x="8.32" y="0" width="1.1" height="2.4" fill="#3e3e3e"/><rect x="10.40" y="0" width="1.1" height="2.4" fill="#3e3e3e"/><rect x="12.48" y="0" width="1.1" height="2.4" fill="#3e3e3e"/><rect x="14.56" y="0" width="1.1" height="2.4" fill="#3e3e3e"/></svg>
<div style="left:571.6px;top:98.5px;width:30.8px;height:31.30000000000001px;background:#535353;"></div>
<div style="left:571.6px;top:98.5px;width:30.8px;height:1px;background:#616161;"></div>
<svg style="left:578.4px;top:101.9px;" width="17" height="3" viewBox="0 0 17 3"><rect x="0.00" y="0" width="1.1" height="2.4" fill="#3e3e3e"/><rect x="2.08" y="0" width="1.1" height="2.4" fill="#3e3e3e"/><rect x="4.16" y="0" width="1.1" height="2.4" fill="#3e3e3e"/><rect x="6.24" y="0" width="1.1" height="2.4" fill="#3e3e3e"/><rect x="8.32" y="0" width="1.1" height="2.4" fill="#3e3e3e"/><rect x="10.40" y="0" width="1.1" height="2.4" fill="#3e3e3e"/><rect x="12.48" y="0" width="1.1" height="2.4" fill="#3e3e3e"/><rect x="14.56" y="0" width="1.1" height="2.4" fill="#3e3e3e"/></svg>
<div style="left:571.6px;top:131.2px;width:30.8px;height:55.20000000000002px;background:#535353;"></div>
<div style="left:571.6px;top:131.2px;width:30.8px;height:1px;background:#616161;"></div>
<svg style="left:578.4px;top:134.6px;" width="17" height="3" viewBox="0 0 17 3"><rect x="0.00" y="0" width="1.1" height="2.4" fill="#3e3e3e"/><rect x="2.08" y="0" width="1.1" height="2.4" fill="#3e3e3e"/><rect x="4.16" y="0" width="1.1" height="2.4" fill="#3e3e3e"/><rect x="6.24" y="0" width="1.1" height="2.4" fill="#3e3e3e"/><rect x="8.32" y="0" width="1.1" height="2.4" fill="#3e3e3e"/><rect x="10.40" y="0" width="1.1" height="2.4" fill="#3e3e3e"/><rect x="12.48" y="0" width="1.1" height="2.4" fill="#3e3e3e"/><rect x="14.56" y="0" width="1.1" height="2.4" fill="#3e3e3e"/></svg>
<div style="left:571.6px;top:188px;width:30.8px;height:293px;background:#515151;"></div>
<div style="left:571.6px;top:188px;width:30.8px;height:1px;background:#5c5c5c;"></div>
<svg style="left:0;top:0" width="800" height="481" viewBox="0 0 800 481"><rect x="582.5" y="76.9" width="3.4" height="3.2" fill="none" stroke="#c6c6c6" stroke-width="1"/><rect x="582.5" y="81.9" width="3.4" height="3.2" fill="none" stroke="#c6c6c6" stroke-width="1"/><rect x="582" y="86.6" width="4.4" height="4" fill="#b0b0b0"/><path d="M591 90.4C594.6 87.4 594.4 81.4 590.4 79.2" fill="none" stroke="#c6c6c6" stroke-width="1.6"/><path d="M588.2 77L592.6 77.2L590 81.4Z" fill="#c6c6c6"/><path d="M585 109.8L589 111.6L589 116.4L585 118.4L581 116.4L581 111.6Z" fill="none" stroke="#c6c6c6" stroke-width="1.1"/><path d="M581 111.6L585 113.4L589 111.6M585 113.4L585 118.4" fill="none" stroke="#c6c6c6" stroke-width="0.9"/><rect x="590.6" y="110" width="3.4" height="3.2" fill="#c6c6c6"/><rect x="590.6" y="114.4" width="3.4" height="3.2" fill="#c6c6c6"/><rect x="581" y="120" width="13" height="3" fill="#c6c6c6"/><rect x="591.4" y="120.8" width="1.4" height="1.4" fill="#555"/><rect x="583.6" y="151" width="6.6" height="7.2" fill="#c6c6c6"/><path d="M585.2 151L582.4 147.2M586.6 151L586.6 145.4M588.2 151L590.8 147.6" stroke="#c6c6c6" stroke-width="1.3" fill="none"/><ellipse cx="581.9" cy="145.8" rx="1.5" ry="2.3" transform="rotate(-30 581.9 145.8)" fill="#c6c6c6"/><ellipse cx="586.6" cy="144.2" rx="1.2" ry="2" fill="#c6c6c6"/><path d="M589.8 146.8L591.4 144.4L593.8 146.2L592 148.6Z" fill="#c6c6c6"/><path d="M579.6 167.4C581.8 166.2 585 166.4 586.6 168L594.6 168L594.6 169.6L586.6 169.6C585 171.4 581.6 171 579.6 167.4Z" fill="#c6c6c6"/><path d="M580 174.6L588.4 174.6L588.4 176.2L580 176.2Z" fill="#c6c6c6"/><path d="M588 175.4L592.6 171.8C594.8 173.4 595.2 177.6 592.8 179.6Z" fill="#c6c6c6"/></svg>
<div style="left:603.8px;top:63.6px;width:196.2px;height:14px;background:#393939;"></div>
<div style="left:603.8px;top:63.6px;width:29.600000000000023px;height:14.4px;background:#535353;"></div>
<div style="left:603.8px;top:63.6px;width:29.600000000000023px;height:1px;background:#626262;"></div>
<svg style="left:610.318px;top:65.16px" width="25" height="15" viewBox="0 -10.34 25 15"><text x="0" y="0" font-size="9.6" fill="#f0f0f0">颜色</text></svg>
<div style="left:633.4px;top:63.6px;width:1px;height:14px;background:#2c2c2c;"></div>
<div style="left:634.4px;top:63.6px;width:29.200000000000045px;height:14px;background:#3c3c3c;"></div>
<svg style="left:639.918px;top:65.16px" width="24" height="15" viewBox="0 -10.34 24 15"><text x="0" y="0" font-size="9.5" fill="#a8a8a8">色板</text></svg>
<div style="left:663.6px;top:63.6px;width:1px;height:14px;background:#2c2c2c;"></div>
<div style="left:664.6px;top:63.6px;width:29.199999999999932px;height:14px;background:#3c3c3c;"></div>
<svg style="left:670.318px;top:65.16px" width="23" height="15" viewBox="0 -10.34 23 15"><text x="0" y="0" font-size="9.2" fill="#a8a8a8">调整</text></svg>
<div style="left:693.8px;top:63.6px;width:1px;height:14px;background:#2c2c2c;"></div>
<div style="left:694.8px;top:63.6px;width:29.600000000000023px;height:14px;background:#3c3c3c;"></div>
<svg style="left:700.918px;top:65.16px" width="22" height="15" viewBox="0 -10.34 22 15"><text x="0" y="0" font-size="9.2" fill="#a8a8a8">样式</text></svg>
<div style="left:724.4px;top:63.6px;width:1px;height:14px;background:#2c2c2c;"></div>
<svg style="left:785px;top:67.6px;" width="12" height="7" viewBox="0 0 12 7"><path d="M0 3L4.4 3L2.2 5.6Z" fill="#d8d8d8"/><rect x="5.2" y="0" width="6.4" height="1.1" fill="#d0d0d0"/><rect x="5.2" y="2.5" width="6.4" height="1.1" fill="#d0d0d0"/><rect x="5.2" y="5" width="6.4" height="1.1" fill="#d0d0d0"/></svg>
<div style="left:603.8px;top:77.6px;width:196.2px;height:91.6px;background:#535353;"></div>
<div style="left:617.4px;top:96px;width:14px;height:14.4px;background:#ffffff;box-shadow:0 0 0 0.6px #3a3a3a"></div>
<div style="left:608.6px;top:87.6px;width:15.2px;height:15.2px;background:#f73e3e;box-shadow:inset 0 0 0 1px #f0a0a0, 0 0 0 1px #3c3c3c"></div>
<span style="left:639.4px;top:88.40px;font-size:9.8px;color:#e8e8e8;font-weight:bold;transform:scaleX(0.820);transform-origin:0 0;">R</span>
<div style="left:652px;top:88.8px;width:66px;height:4.4px;background:linear-gradient(90deg,#0a3c3c,#ee4040);box-shadow:0 0 0 0.7px #8a8a8a,0 0 0 1.3px #3a3a3a"></div>
<svg style="left:710.7px;top:94.3px;" width="11" height="8" viewBox="0 0 11 8"><defs><linearGradient id="hg" x1="0" y1="0" x2="0" y2="1"><stop offset="0" stop-color="#b4b4b4"/><stop offset="1" stop-color="#8e8e8e"/></linearGradient></defs><path d="M0.7 6.9L0.7 5.3L3.8 1.2Q4.8 0.1 5.8 1.2L8.9 5.3L8.9 6.9Z" fill="url(#hg)" stroke="#383838" stroke-width="0.7"/></svg>
<div style="left:723.4px;top:87.2px;width:40px;height:14.6px;background:#3a3a3a;box-shadow:0 0 0 0.6px #444, inset 0 1px 0 #303030"></div>
<span style="left:725.9px;top:90.09px;font-size:9.7px;color:#f0f0f0;transform:scaleX(1.038);transform-origin:0 0;">247</span>
<span style="left:639.4px;top:109.00px;font-size:9.8px;color:#e8e8e8;font-weight:bold;transform:scaleX(0.761);transform-origin:0 0;">G</span>
<div style="left:652px;top:109.4px;width:66px;height:4.4px;background:linear-gradient(90deg,#ea0a42,#f0883c 50%,#ecec3c);box-shadow:0 0 0 0.7px #8a8a8a,0 0 0 1.3px #3a3a3a"></div>
<svg style="left:662.8000000000001px;top:114.9px;" width="11" height="8" viewBox="0 0 11 8"><defs><linearGradient id="hg" x1="0" y1="0" x2="0" y2="1"><stop offset="0" stop-color="#b4b4b4"/><stop offset="1" stop-color="#8e8e8e"/></linearGradient></defs><path d="M0.7 6.9L0.7 5.3L3.8 1.2Q4.8 0.1 5.8 1.2L8.9 5.3L8.9 6.9Z" fill="url(#hg)" stroke="#383838" stroke-width="0.7"/></svg>
<div style="left:723.4px;top:107.80000000000001px;width:40px;height:14.6px;background:#3a3a3a;box-shadow:0 0 0 0.6px #444, inset 0 1px 0 #303030"></div>
<span style="left:725.9px;top:110.69px;font-size:9.7px;color:#f0f0f0;transform:scaleX(1.038);transform-origin:0 0;">62</span>
<span style="left:639.4px;top:129.60px;font-size:9.8px;color:#e8e8e8;font-weight:bold;transform:scaleX(0.820);transform-origin:0 0;">B</span>
<div style="left:652px;top:130px;width:66px;height:4.4px;background:linear-gradient(90deg,#ea4408,#ee3c80 50%,#ec40ee);box-shadow:0 0 0 0.7px #8a8a8a,0 0 0 1.3px #3a3a3a"></div>
<svg style="left:662.8000000000001px;top:135.5px;" width="11" height="8" viewBox="0 0 11 8"><defs><linearGradient id="hg" x1="0" y1="0" x2="0" y2="1"><stop offset="0" stop-color="#b4b4b4"/><stop offset="1" stop-color="#8e8e8e"/></linearGradient></defs><path d="M0.7 6.9L0.7 5.3L3.8 1.2Q4.8 0.1 5.8 1.2L8.9 5.3L8.9 6.9Z" fill="url(#hg)" stroke="#383838" stroke-width="0.7"/></svg>
<div style="left:723.4px;top:128.4px;width:40px;height:14.6px;background:#3a3a3a;box-shadow:0 0 0 0.6px #444, inset 0 1px 0 #303030"></div>
<span style="left:725.9px;top:131.29px;font-size:9.7px;color:#f0f0f0;transform:scaleX(1.038);transform-origin:0 0;">62</span>
<svg style="left:612.6px;top:131.6px;" width="11" height="11" viewBox="0 0 11 11"><path d="M5.2 0.6L10 9.8L0.4 9.8Z" fill="#d6d6d6"/><rect x="4.6" y="3.6" width="1.3" height="3.4" fill="#333"/><rect x="4.6" y="7.8" width="1.3" height="1.2" fill="#333"/></svg>
<div style="left:626.4px;top:132.2px;width:9.4px;height:9.4px;background:#f03c3c;box-shadow:inset 0 0 0 0.8px #f2b0b0, 0 0 0 0.8px #3a3a3a"></div>
<div style="left:609px;top:153.2px;width:155.4px;height:11.2px;background:linear-gradient(90deg,#ff0000 0%,#ffff00 17%,#00ff00 33%,#00ffff 50%,#0000ff 67%,#ff00ff 83%,#ff0000 100%)"></div>
<div style="left:609px;top:153.2px;width:155.4px;height:11.2px;background:linear-gradient(180deg,rgba(255,255,255,1) 0%,rgba(255,255,255,0) 48%,rgba(0,0,0,0) 52%,rgba(0,0,0,1) 100%)"></div>
<div style="left:764.4px;top:153.2px;width:7px;height:5.6px;background:#ffffff;"></div>
<div style="left:764.4px;top:158.8px;width:7px;height:5.6px;background:#000000;"></div>
<div style="left:603.8px;top:169.2px;width:196.2px;height:2.6px;background:#282828;"></div>
<div style="left:603.8px;top:171.7px;width:196.2px;height:14px;background:#393939;"></div>
<div style="left:603.8px;top:171.7px;width:29.600000000000023px;height:14.4px;background:#535353;"></div>
<div style="left:603.8px;top:171.7px;width:29.600000000000023px;height:1px;background:#626262;"></div>
<svg style="left:610.318px;top:172.46px" width="25" height="15" viewBox="0 -10.34 25 15"><text x="0" y="0" font-size="9.6" fill="#f0f0f0">图层</text></svg>
<div style="left:633.4px;top:171.7px;width:1px;height:14px;background:#2c2c2c;"></div>
<div style="left:634.4px;top:171.7px;width:29.200000000000045px;height:14px;background:#3c3c3c;"></div>
<svg style="left:639.918px;top:172.46px" width="24" height="15" viewBox="0 -10.34 24 15"><text x="0" y="0" font-size="9.5" fill="#a8a8a8">通道</text></svg>
<div style="left:663.6px;top:171.7px;width:1px;height:14px;background:#2c2c2c;"></div>
<div style="left:664.6px;top:171.7px;width:29.199999999999932px;height:14px;background:#3c3c3c;"></div>
<svg style="left:670.318px;top:172.46px" width="23" height="15" viewBox="0 -10.34 23 15"><text x="0" y="0" font-size="9.2" fill="#a8a8a8">路径</text></svg>
<div style="left:693.8px;top:171.7px;width:1px;height:14px;background:#2c2c2c;"></div>
<svg style="left:785px;top:175.7px;" width="12" height="7" viewBox="0 0 12 7"><path d="M0 3L4.4 3L2.2 5.6Z" fill="#d8d8d8"/><rect x="5.2" y="0" width="6.4" height="1.1" fill="#d0d0d0"/><rect x="5.2" y="2.5" width="6.4" height="1.1" fill="#d0d0d0"/><rect x="5.2" y="5" width="6.4" height="1.1" fill="#d0d0d0"/></svg>
<div style="left:603.8px;top:185.8px;width:196.2px;height:69.4px;background:#535353;"></div>
<div style="left:603.8px;top:207px;width:196.2px;height:1px;background:#424242;"></div>
<div style="left:603.8px;top:231px;width:196.2px;height:1px;background:#424242;"></div>
<div style="left:608px;top:189.4px;width:56px;height:15px;background:linear-gradient(#636363,#585858);border-radius:2.5px;box-shadow:0 0 0 1px #3c3c3c"></div>
<svg style="left:612.6px;top:192px;" width="9" height="10" viewBox="0 0 9 10"><circle cx="5.2" cy="3.8" r="2.7" fill="none" stroke="#b8b8b8" stroke-width="1"/><path d="M3.4 5.8L1 8.6" stroke="#b8b8b8" stroke-width="1.2"/></svg>
<svg style="left:625.1px;top:190.00px" width="25" height="15" viewBox="0 -11.00 25 15"><text x="0" y="0" font-size="9.9" fill="#cecece">类型</text></svg>
<svg style="left:656.6px;top:193.4px;" width="5" height="8" viewBox="0 0 5 8"><path d="M0 2.4L2 0L4 2.4ZM0 4.6L4 4.6L2 7Z" fill="#dadada"/></svg>
<svg style="left:0;top:0" width="800" height="481" viewBox="0 0 800 481"><rect x="682.2" y="192.4" width="10.2" height="8.4" fill="none" stroke="#929292" stroke-width="1"/><path d="M683.6 199.4L686.4 196L688.2 198L689.6 196.8L691.2 199.4Z" fill="#929292"/><circle cx="689.6" cy="194.8" r="0.9" fill="#929292"/><circle cx="706.6" cy="196.6" r="4.4" fill="#929292"/><path d="M706.6 192.2A4.4 4.4 0 0 1 706.6 201Z" fill="#5e5e5e" transform="rotate(45 706.6 196.6)"/><rect x="742.2" y="193.2" width="7.8" height="7" fill="none" stroke="#929292" stroke-width="0.9"/><rect x="741.2" y="192.2" width="2" height="2" fill="#929292"/><rect x="741.2" y="199.2" width="2" height="2" fill="#929292"/><rect x="749" y="192.2" width="2" height="2" fill="#929292"/><rect x="749" y="199.2" width="2" height="2" fill="#929292"/><path d="M764.6 192.2L768.4 192.2L770.8 194.6L770.8 201L764.6 201Z" fill="none" stroke="#929292" stroke-width="0.9"/><rect x="761.4" y="196.6" width="5.2" height="4.8" fill="#929292"/></svg>
<span style="left:721px;top:190.41px;font-size:13px;color:#929292;font-family:'Liberation Serif',serif;transform:scaleX(1.184);transform-origin:0 0;">T</span>
<div style="left:789.2px;top:190.2px;width:6px;height:13px;background:linear-gradient(#7a7a7a 0%,#6a6a6a 45%,#3c3c3c 50%,#444 100%);border-radius:1.5px;box-shadow:0 0 0 0.6px #3a3a3a"></div>
<div style="left:608px;top:211.4px;width:89.4px;height:15.6px;background:linear-gradient(#626262,#575757);border-radius:2.5px;box-shadow:0 0 0 1px #3c3c3c"></div>
<svg style="left:614.7px;top:212.40px" width="25" height="15" viewBox="0 -11.00 25 15"><text x="0" y="0" font-size="9.9" fill="#d2d2d2">正常</text></svg>
<svg style="left:689.6px;top:215.6px;" width="5" height="8" viewBox="0 0 5 8"><path d="M0 2.4L2 0L4 2.4ZM0 4.6L4 4.6L2 7Z" fill="#dadada"/></svg>
<svg style="left:703.9000000000001px;top:212.40px" width="43" height="15" viewBox="0 -11.00 43 15"><text x="0" y="0" font-size="9.7" fill="#c8c8c8">不透明度</text></svg>
<div style="left:744.8px;top:218px;width:1.4px;height:1.5px;background:#c8c8c8;"></div>
<div style="left:744.8px;top:222.4px;width:1.4px;height:1.5px;background:#c8c8c8;"></div>
<div style="left:751px;top:211.8px;width:28.6px;height:15.2px;background:#4a4a4a;border-radius:2px 0 0 2px;box-shadow:0 0 0 0.7px #404040"></div>
<div style="left:779.6px;top:211.8px;width:15.4px;height:15.2px;background:linear-gradient(#636363,#595959);border-radius:0 2px 2px 0;box-shadow:0 0 0 0.7px #404040"></div>
<span style="left:753.6px;top:214.87px;font-size:9.6px;color:#7a7a7a;transform:scaleX(0.912);transform-origin:0 0;">100%</span>
<svg style="left:785.4px;top:218.6px;" width="4.8" height="3.2" viewBox="0 0 4.8 3.2"><path d="M0 0L3.8 0L1.9 2.2Z" fill="#d4d4d4"/></svg>
<svg style="left:609.1px;top:235.00px" width="24" height="15" viewBox="0 -11.00 24 15"><text x="0" y="0" font-size="9.9" fill="#c8c8c8">锁定</text></svg>
<div style="left:630.8px;top:240.4px;width:1.4px;height:1.5px;background:#c8c8c8;"></div>
<div style="left:630.8px;top:244.8px;width:1.4px;height:1.5px;background:#c8c8c8;"></div>
<svg style="left:0;top:0" width="800" height="481" viewBox="0 0 800 481"><rect x="640.0" y="238.2" width="3.1" height="3.1" fill="#9c9c9c"/><rect x="640.0" y="241.3" width="3.1" height="3.1" fill="#646464"/><rect x="640.0" y="244.4" width="3.1" height="3.1" fill="#9c9c9c"/><rect x="643.1" y="238.2" width="3.1" height="3.1" fill="#646464"/><rect x="643.1" y="241.3" width="3.1" height="3.1" fill="#9c9c9c"/><rect x="643.1" y="244.4" width="3.1" height="3.1" fill="#646464"/><rect x="646.2" y="238.2" width="3.1" height="3.1" fill="#9c9c9c"/><rect x="646.2" y="241.3" width="3.1" height="3.1" fill="#646464"/><rect x="646.2" y="244.4" width="3.1" height="3.1" fill="#9c9c9c"/><rect x="640" y="238.2" width="9.3" height="9.3" fill="none" stroke="#9a9a9a" stroke-width="0.7"/><path d="M669.4 237.2L663.4 243.6" stroke="#969696" stroke-width="1.5" stroke-linecap="round"/><path d="M657.4 246.8C659 246.4 659.2 244 661.4 243.4C663 243.2 664 244.4 663.4 245.6C662.4 247.2 659.4 247.4 657.4 246.8Z" fill="#969696"/><path d="M680.6 238.6L680.6 246.6M676.6 242.6L684.6 242.6" stroke="#969696" stroke-width="0.9"/><path d="M678.8 239.6L680.6 237.4L682.4 239.6ZM678.8 245.6L680.6 247.8L682.4 245.6ZM677.6 240.8L675.4 242.6L677.6 244.4ZM683.6 240.8L685.8 242.6L683.6 244.4Z" fill="#969696"/><rect x="694.8" y="242" width="7.4" height="5.2" rx="0.8" fill="#8e8e8e"/><path d="M696.5 242L696.5 240.4A2 2 0 0 1 700.5 240.4L700.5 242" fill="none" stroke="#969696" stroke-width="1.1"/><rect x="698" y="243.6" width="1" height="1.8" fill="#555"/></svg>
<svg style="left:724.1px;top:235.00px" width="24" height="15" viewBox="0 -11.00 24 15"><text x="0" y="0" font-size="9.9" fill="#c8c8c8">填充</text></svg>
<div style="left:745.2px;top:240.4px;width:1.4px;height:1.5px;background:#c8c8c8;"></div>
<div style="left:745.2px;top:244.8px;width:1.4px;height:1.5px;background:#c8c8c8;"></div>
<div style="left:751px;top:235px;width:28.6px;height:15.2px;background:#4a4a4a;border-radius:2px 0 0 2px;box-shadow:0 0 0 0.7px #404040"></div>
<div style="left:779.6px;top:235px;width:15.4px;height:15.2px;background:linear-gradient(#636363,#595959);border-radius:0 2px 2px 0;box-shadow:0 0 0 0.7px #404040"></div>
<span style="left:753.6px;top:238.07px;font-size:9.6px;color:#7a7a7a;transform:scaleX(0.912);transform-origin:0 0;">100%</span>
<svg style="left:785.4px;top:241.79999999999998px;" width="4.8" height="3.2" viewBox="0 0 4.8 3.2"><path d="M0 0L3.8 0L1.9 2.2Z" fill="#d4d4d4"/></svg>
<div style="left:603.8px;top:255.2px;width:184px;height:225.8px;background:#454545;"></div>
<div style="left:787.8px;top:255.2px;width:12.2px;height:225.8px;background:#3c3c3c;"></div>
<div style="left:603.8px;top:255.2px;width:196.2px;height:0.8px;background:#3a3a3a;"></div>
<div style="left:603.8px;top:256px;width:26px;height:21.4px;background:#535353;"></div>
<div style="left:629.8px;top:256px;width:158px;height:21.4px;background:#566378;"></div>
<div style="left:603.8px;top:277.4px;width:184px;height:1px;background:#3a3a3a;"></div>
<div style="left:629.4px;top:256px;width:0.8px;height:21.4px;background:#3f3f3f;"></div>
<svg style="left:610.4px;top:262px;" width="13" height="9" viewBox="0 0 13 9"><path d="M0.6 4.1C3 0.9 8.6 0.9 11 4.1C8.6 7.3 3 7.3 0.6 4.1Z" fill="#b2b2b2"/><circle cx="5.8" cy="3.9" r="2.1" fill="#404040"/><circle cx="5.1" cy="3.2" r="0.7" fill="#c8c8c8"/></svg>
<div style="left:632.4px;top:258px;width:25px;height:15.6px;background:#ffffff;box-shadow:0 0 0 1px #1e1e1e"></div>
<svg style="left:632.4px;top:258px;" width="25" height="16" viewBox="0 0 25 16"><path d="M8.6 6.4L14.6 8.2" stroke="#f27070" stroke-width="1.9" stroke-linecap="round"/><path d="M7.6 10.4L15 7.6" stroke="#ee4a4a" stroke-width="1.9" stroke-linecap="round"/><path d="M11.6 7.8L14.6 7.8" stroke="#e40808" stroke-width="1.8" stroke-linecap="round"/></svg>
<svg style="left:666.9150000000001px;top:260.15px" width="23" height="15" viewBox="0 -10.45 23 15"><text x="0.5" y="0" font-size="9.5" font-style="italic" font-weight="bold" fill="#f2f2f2">背景</text></svg>
<svg style="left:764.8px;top:260px;" width="11" height="13" viewBox="0 0 11 13"><rect x="1" y="5.2" width="8" height="5.8" rx="0.8" fill="none" stroke="#cfcfcf" stroke-width="1.1"/><path d="M2.8 5.2L2.8 3.4A2.2 2.2 0 0 1 7.2 3.4L7.2 5.2" fill="none" stroke="#cfcfcf" stroke-width="1.1"/><rect x="4.4" y="7.2" width="1.2" height="2" fill="#cfcfcf"/></svg>
<svg style="left:680px;top:476px;" width="16" height="5" viewBox="0 0 16 5"><path d="M1.6 5C1.6 2.4 6.4 2.4 6.4 5Z" fill="#c0c0c0"/><circle cx="12.6" cy="4.4" r="0.8" fill="#8a8a8a"/></svg>
<div style="left:797.3px;top:63.6px;width:1px;height:191.6px;background:#434343;"></div>
<div style="left:798.3px;top:63.6px;width:1.7px;height:191.6px;background:#4b4b4b;"></div>
<div style="left:797.3px;top:255.2px;width:2.7px;height:225.8px;background:#353535;"></div>
<div style="left:799.2px;top:0px;width:0.8px;height:63.6px;background:#3a3a3a;"></div>
</div></body></html>
